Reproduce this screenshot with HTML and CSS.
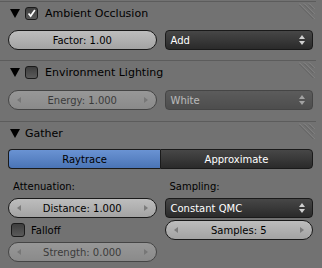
FILE: index.html
```html
<!DOCTYPE html>
<html lang="en">
<head>
  <meta charset="UTF-8" />
  <title>Render Settings - World</title>
  <link rel="stylesheet" href="styles.css">
</head>
<body>
  <div class="panels">

    <section class="panel">
      <div class="panel-head">
        <span class="tri"></span>
        <span class="check on">
          <svg width="13" height="13" viewBox="0 0 13 13"><path d="M3 6.5 L5.5 9.5 L10.5 2.5" fill="none" stroke="#fff" stroke-width="2"/></svg>
        </span>
        <span class="title">Ambient Occlusion</span>
        <svg class="grip" width="16" height="16" viewBox="0 0 16 16">
          <path d="M0 0.5L15.5 16M5 0.5L15.5 11M10 0.5L15.5 6" stroke="#8c8c8c" fill="none"/>
          <path d="M0 1.5L14.5 16M5 1.5L14.5 11M10 1.5L14.5 6" stroke="#5e5e5e" fill="none"/>
        </svg>
      </div>
      <div class="panel-body body-ao">
        <div class="cols">
          <div class="num">Factor: 1.00</div>
          <div class="menu"><span>Add</span><span class="updown"></span></div>
        </div>
      </div>
    </section>

    <section class="panel">
      <div class="panel-head">
        <span class="tri"></span>
        <span class="check"></span>
        <span class="title">Environment Lighting</span>
        <svg class="grip" width="16" height="16" viewBox="0 0 16 16">
          <path d="M0 0.5L15.5 16M5 0.5L15.5 11M10 0.5L15.5 6" stroke="#8c8c8c" fill="none"/>
          <path d="M0 1.5L14.5 16M5 1.5L14.5 11M10 1.5L14.5 6" stroke="#5e5e5e" fill="none"/>
        </svg>
      </div>
      <div class="panel-body body-env">
        <div class="cols">
          <div class="num arrows off"><i class="arr l"></i><span>Energy: 1.000</span><i class="arr r"></i></div>
          <div class="menu off"><span>White</span><span class="updown"></span></div>
        </div>
      </div>
    </section>

    <section class="panel">
      <div class="panel-head">
        <span class="tri"></span>
        <span class="title gather">Gather</span>
        <svg class="grip" width="16" height="16" viewBox="0 0 16 16">
          <path d="M0 0.5L15.5 16M5 0.5L15.5 11M10 0.5L15.5 6" stroke="#8c8c8c" fill="none"/>
          <path d="M0 1.5L14.5 16M5 1.5L14.5 11M10 1.5L14.5 6" stroke="#5e5e5e" fill="none"/>
        </svg>
      </div>
      <div class="panel-body body-gather">
        <div class="toggle">
          <div class="tab active">Raytrace</div>
          <div class="tab">Approximate</div>
        </div>
        <div class="cols grid-2">
          <div class="col">
            <div class="label">Attenuation:</div>
            <div class="num arrows"><i class="arr l"></i><span>Distance: 1.000</span><i class="arr r"></i></div>
            <div class="check-row"><span class="check"></span><span>Falloff</span></div>
            <div class="num arrows off"><i class="arr l"></i><span>Strength: 0.000</span><i class="arr r"></i></div>
          </div>
          <div class="col">
            <div class="label">Sampling:</div>
            <div class="menu"><span>Constant QMC</span><span class="updown"></span></div>
            <div class="num arrows"><i class="arr l"></i><span>Samples: 5</span><i class="arr r"></i></div>
          </div>
        </div>
      </div>
    </section>

  </div>
</body>
</html>
```
FILE: styles.css
```css
:root {
  --bg: #727272;
  --line: #5c5c5c;
  --outline: #1a1a1a;
  --text: #000;
}
* { box-sizing: border-box; }
body {
  margin: 0; background: var(--bg); color: var(--text);
  font-family: "DejaVu Sans", sans-serif; font-size: 10px;
  width: 322px; height: 268px; overflow: hidden;
}
.panels { padding-top: 1px; }
.panel { border-top: 1px solid var(--line); margin-right: 6px; }
.panel-body { margin-right: -6px; }

.panel-head {
  height: 22px; display: flex; align-items: center; padding-left: 10px; position: relative;
}
.tri {
  width: 0; height: 0; border-left: 5px solid transparent; border-right: 5px solid transparent;
  border-top: 9px solid #000; margin-right: 5px;
}
.title { font-size: 11px; margin-left: 7px; }
.title.gather { margin-left: 0; }
.grip { position: absolute; right: 1px; top: 1px; }

.check {
  width: 13px; height: 13px; border-radius: 3px; border: 1px solid var(--outline);
  background: linear-gradient(#3e3e3e, #5a5a5a); display: inline-flex;
  align-items: center; justify-content: center;
}
.check svg { display: block; }

.panel-body { padding: 0 9px 0 8px; }
.body-ao { padding-top: 6px; padding-bottom: 10px; }
.body-env { padding-top: 7px; padding-bottom: 11px; }
.body-gather { padding-top: 5px; }

.cols { display: grid; grid-template-columns: 1fr 1fr; gap: 8px; }
.grid-2 { margin-top: 7px; }
.col { display: flex; flex-direction: column; gap: 2px; }

.num {
  height: 20px; border: 1px solid var(--outline); border-radius: 10px;
  background: linear-gradient(#bdbdbd, #a3a3a3); color: #000;
  display: flex; align-items: center; justify-content: center; padding: 0 8px;
}
.num span { flex: 1; text-align: center; }
.arr { width: 0; height: 0; border-top: 3px solid transparent; border-bottom: 3px solid transparent; }
.arr.l { border-right: 4px solid #7c7c7c; }
.arr.r { border-left: 4px solid #7c7c7c; }

.menu {
  height: 20px; border: 1px solid var(--outline); border-radius: 4px;
  background: linear-gradient(#474747, #2a2a2a); color: #fff;
  display: flex; align-items: center; justify-content: space-between; padding: 0 7px 0 5px;
}
.updown { width: 6px; height: 10px; position: relative; }
.updown::before, .updown::after {
  content: ""; position: absolute; left: 0; width: 0; height: 0;
  border-left: 3px solid transparent; border-right: 3px solid transparent;
}
.updown::before { top: 0; border-bottom: 4px solid #d0d0d0; }
.updown::after { bottom: 0; border-top: 4px solid #d0d0d0; }

.off { opacity: 0.5; }

.toggle { display: flex; height: 20px; }
.tab {
  flex: 1; border: 1px solid var(--outline); display: flex; align-items: center; justify-content: center;
  background: linear-gradient(#474747, #2a2a2a); color: #fff;
}
.tab:first-child { border-radius: 4px 0 0 4px; border-right: none; }
.tab:last-child { border-radius: 0 4px 4px 0; }
.tab.active { background: linear-gradient(#6a93d3, #4a74b6); color: #000; }

.label { height: 20px; display: flex; align-items: center; padding-left: 5px; }
.check-row { height: 20px; display: flex; align-items: center; gap: 6px; padding-left: 3px; }
.check-row .check { width: 14px; height: 14px; }
```
